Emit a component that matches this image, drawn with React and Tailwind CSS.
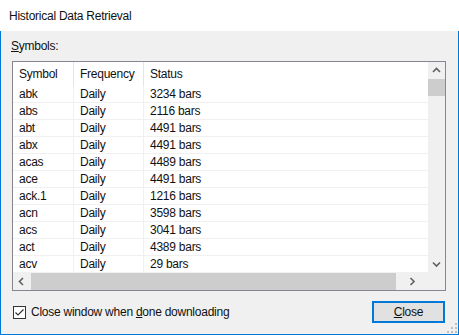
import React from 'react';

const ROWS = [
  ['abk', 'Daily', '3234 bars'],
  ['abs', 'Daily', '2116 bars'],
  ['abt', 'Daily', '4491 bars'],
  ['abx', 'Daily', '4491 bars'],
  ['acas', 'Daily', '4489 bars'],
  ['ace', 'Daily', '4491 bars'],
  ['ack.1', 'Daily', '1216 bars'],
  ['acn', 'Daily', '3598 bars'],
  ['acs', 'Daily', '3041 bars'],
  ['act', 'Daily', '4389 bars'],
  ['acv', 'Daily', '29 bars'],
];

const Chevron = ({ dir }) => {
  const paths = {
    up: 'M1 5 L4.5 1.5 L8 5',
    down: 'M1 1.5 L4.5 5 L8 1.5',
    left: 'M5 1 L1.5 4.5 L5 8',
    right: 'M1.5 1 L5 4.5 L1.5 8',
  };
  const vertical = dir === 'up' || dir === 'down';
  return (
    <svg width={vertical ? 9 : 7} height={vertical ? 7 : 9} viewBox={vertical ? '0 0 9 7' : '0 0 7 9'}>
      <path d={paths[dir]} fill="none" stroke="#606060" strokeWidth="1.6" />
    </svg>
  );
};

const HistoricalDataRetrieval = () => {
  return (
    <div
      className="relative w-[459px] h-[335px] flex flex-col text-[12px] tracking-[-0.25px] text-[#111] overflow-hidden"
      style={{ fontFamily: '"Liberation Sans", Arial, sans-serif' }}
    >
      {/* title bar */}
      <div className="h-[31px] shrink-0 bg-white flex items-center pl-[9px]">
        <span>Historical Data Retrieval</span>
      </div>

      <div className="flex-1 bg-[#f0f0f0] border-x border-b border-[#0078d7] flex flex-col">
        <div className="pl-[10px] mt-[7px] leading-[16px]">
          <span className="underline">S</span>ymbols:
        </div>

        {/* list view */}
        <div className="ml-[11px] mt-[7px] w-[434px] h-[230px] border border-[#828790] bg-white grid grid-cols-[1fr_17px] grid-rows-[1fr_17px]">
          <div className="overflow-hidden">
            <div className="h-[24px] flex items-center">
              <div className="w-[61px] h-full border-r border-[#e5e5e5] pl-[6px] flex items-center">Symbol</div>
              <div className="w-[70px] h-full border-r border-[#e5e5e5] pl-[6px] flex items-center">Frequency</div>
              <div className="flex-1 pl-[6px] flex items-center">Status</div>
            </div>
            {ROWS.map(([sym, freq, status]) => (
              <div key={sym} className="h-[17px] flex border-b border-[#f0f0f0]">
                <div className="w-[61px] border-r border-[#f0f0f0] pl-[6px] leading-[17px]">{sym}</div>
                <div className="w-[70px] border-r border-[#f0f0f0] pl-[6px] leading-[17px]">{freq}</div>
                <div className="flex-1 pl-[6px] leading-[17px]">{status}</div>
              </div>
            ))}
          </div>

          {/* vertical scrollbar */}
          <div className="bg-[#f0f0f0] flex flex-col">
            <div className="h-[17px] flex items-center justify-center">
              <Chevron dir="up" />
            </div>
            <div className="h-[17px] bg-[#cdcdcd]" />
            <div className="flex-1" />
            <div className="h-[17px] flex items-center justify-center">
              <Chevron dir="down" />
            </div>
          </div>

          {/* horizontal scrollbar */}
          <div className="bg-[#f0f0f0] flex items-center">
            <div className="w-[17px] h-full flex items-center justify-center">
              <Chevron dir="left" />
            </div>
            <div className="w-[365px] h-full bg-[#cdcdcd] ml-[1px]" />
            <div className="flex-1 h-full flex items-center justify-center">
              <Chevron dir="right" />
            </div>
          </div>
          <div className="bg-[#f0f0f0]" />
        </div>

        {/* footer */}
        <div className="flex items-center mt-[10px] pl-[12px] pr-[13px]">
          <div className="w-[13px] h-[13px] border border-[#333333] bg-white flex items-center justify-center">
            <svg width="11" height="11" viewBox="0 0 11 11">
              <path d="M1.5 5.5 L4 8 L9.5 2.5" fill="none" stroke="#333333" strokeWidth="1.2" />
            </svg>
          </div>
          <span className="ml-[5px]">
            Close window when <span className="underline">d</span>one downloading
          </span>
          <button className="ml-auto w-[73px] h-[22px] border-2 border-[#0078d7] bg-[#e1e1e1] flex items-center justify-center leading-none">
            <span>
              <span className="underline">C</span>lose
            </span>
          </button>
        </div>
      </div>

      {/* size grip */}
      <svg className="absolute right-[2px] bottom-[2px]" width="10" height="10" viewBox="0 0 10 10">
        <rect x="8" y="0" width="2" height="2" fill="#bfbfbf" />
        <rect x="4" y="4" width="2" height="2" fill="#bfbfbf" />
        <rect x="8" y="4" width="2" height="2" fill="#bfbfbf" />
        <rect x="0" y="8" width="2" height="2" fill="#bfbfbf" />
        <rect x="4" y="8" width="2" height="2" fill="#bfbfbf" />
        <rect x="8" y="8" width="2" height="2" fill="#bfbfbf" />
      </svg>
    </div>
  );
};

export default HistoricalDataRetrieval;
